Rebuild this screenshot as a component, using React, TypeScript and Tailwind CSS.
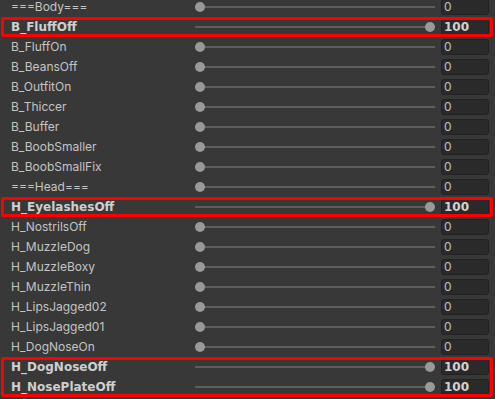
import React from "react"

type Row = { name: string; value: number; on?: boolean }

const groups: Row[][] = [
  [{ name: "===Body===", value: 0 }],
  [{ name: "B_FluffOff", value: 100, on: true }],
  [
    { name: "B_FluffOn", value: 0 },
    { name: "B_BeansOff", value: 0 },
    { name: "B_OutfitOn", value: 0 },
    { name: "B_Thiccer", value: 0 },
    { name: "B_Buffer", value: 0 },
    { name: "B_BoobSmaller", value: 0 },
    { name: "B_BoobSmallFix", value: 0 },
    { name: "===Head===", value: 0 },
  ],
  [{ name: "H_EyelashesOff", value: 100, on: true }],
  [
    { name: "H_NostrilsOff", value: 0 },
    { name: "H_MuzzleDog", value: 0 },
    { name: "H_MuzzleBoxy", value: 0 },
    { name: "H_MuzzleThin", value: 0 },
    { name: "H_LipsJagged02", value: 0 },
    { name: "H_LipsJagged01", value: 0 },
    { name: "H_DogNoseOn", value: 0 },
  ],
  [
    { name: "H_DogNoseOff", value: 100, on: true },
    { name: "H_NosePlateOff", value: 100, on: true },
  ],
]

function ShapeRow({ row }: { row: Row }) {
  const bold = row.on
  return (
    <div className="flex h-5 items-center">
      <div
        className={
          bold
            ? "w-[195px] pl-[11px] font-['DejaVu_Sans',sans-serif] text-[12px] font-bold text-[#cfcfcf]"
            : "w-[195px] pl-[11px] font-['Inter',sans-serif] text-[12px] text-[#c4c4c4]"
        }
      >
        {row.name}
      </div>
      {/* slider */}
      <div className="relative flex h-5 flex-1 items-center">
        <div className="h-[2px] w-full bg-[#5e5e5e]" />
        <div
          className="absolute top-[5px] h-[10px] w-[10px] rounded-full bg-[#999999]"
          style={{ left: `calc(${row.value}% - ${row.value / 10}px)` }}
        />
      </div>
      <div className="mx-[6px] flex h-4 w-[48px] items-center rounded-[3px] border border-[#212121] bg-[#2a2a2a] pl-[2px]">
        <span
          className={
            bold
              ? "font-['DejaVu_Sans',sans-serif] text-[12px] font-bold leading-none text-[#d2d2d2]"
              : "font-['Inter',sans-serif] text-[12px] leading-none text-[#c4c4c4]"
          }
        >
          {row.value}
        </span>
      </div>
    </div>
  )
}

export default function App() {
  return (
    <div className="h-[399px] w-[495px] overflow-hidden bg-[#383838]">
      <div className="-mt-[3px] flex flex-col">
        {groups.map((g, i) => {
          const marked = g[0].on
          return (
            <div key={i} className="relative">
              {g.map(r => (
                <ShapeRow key={r.name} row={r} />
              ))}
              {marked && (
                <div className="pointer-events-none absolute inset-y-0 left-[1px] right-[2px] rounded-[2px] border-[3px] border-[#ff0000]" />
              )}
            </div>
          )
        })}
      </div>
    </div>
  )
}
